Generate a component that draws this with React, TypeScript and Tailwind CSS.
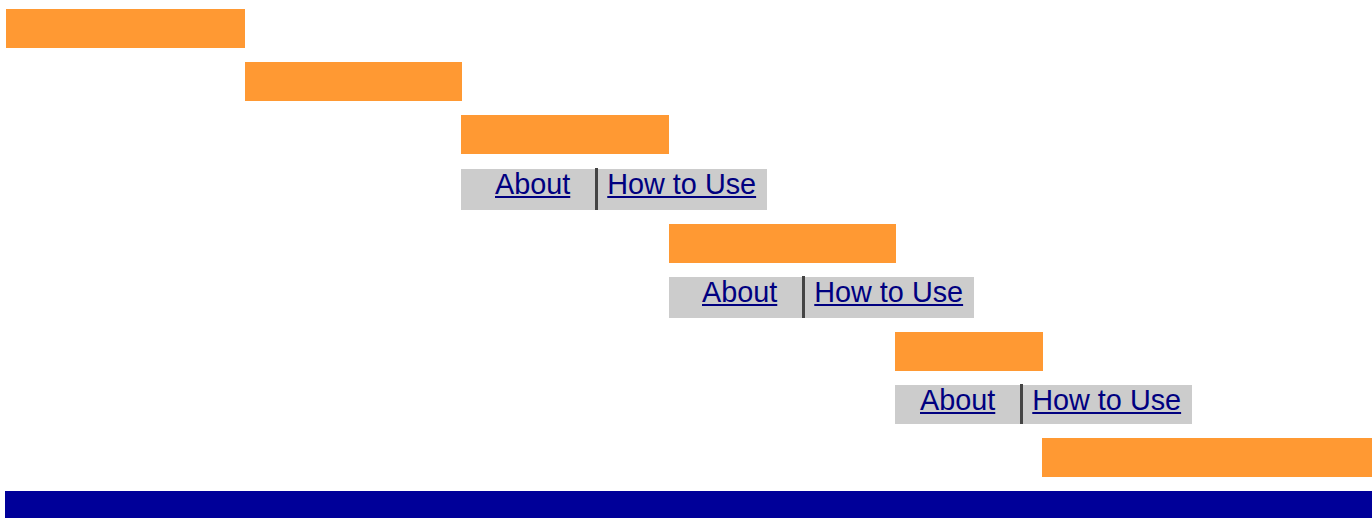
const Bar = ({ className }: { className: string }) => (
  <div className={`h-[39px] shrink-0 bg-[#ff9933] ${className}`} />
);

const Nav = ({ className, aboutPad }: { className: string; aboutPad: string }) => (
  <div className={`flex items-stretch bg-[#cccccc] shrink-0 ${className}`}>
    <div className={`flex items-start pt-px ${aboutPad} pr-[25px]`}>
      <a href="#" className="text-[28.8px] leading-[29px] text-[#000080] underline">
        About
      </a>
    </div>
    <div className="-mt-px w-[3px] bg-[#444444]" />
    <div className="flex items-start pt-px pl-[9px] pr-[10px]">
      <a href="#" className="text-[28.8px] leading-[29px] text-[#000080] underline whitespace-nowrap">
        How to Use
      </a>
    </div>
  </div>
);

export default function App() {
  return (
    <div className="w-[1372px] overflow-hidden bg-white pt-[9px] font-['Liberation_Sans',Arial,sans-serif]">
      <div className="flex flex-col">
        <Bar className="ml-[6px] w-[239px]" />
        <Bar className="ml-[245px] mt-[14px] w-[217px]" />
        <Bar className="ml-[461px] mt-[14px] w-[208px]" />
        <Nav className="ml-[461px] mt-[15px] h-[41px] w-[306px]" aboutPad="pl-[34px]" />
        <Bar className="ml-[669px] mt-[14px] w-[227px]" />
        <Nav className="ml-[669px] mt-[14px] h-[41px] w-[305px]" aboutPad="pl-[33px]" />
        <Bar className="ml-[895px] mt-[14px] w-[148px]" />
        <Nav className="ml-[895px] mt-[14px] h-[39px] w-[297px]" aboutPad="pl-[25px]" />
        <Bar className="ml-[1042px] mt-[14px] w-[330px]" />
        <div className="ml-[5px] mt-[14px] h-[40px] bg-[#000099]" />
      </div>
    </div>
  );
}
